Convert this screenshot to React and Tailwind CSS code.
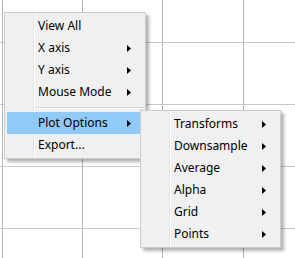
import React from "react";

function Arrow() {
  return (
    <svg width="4" height="7" viewBox="0 0 4 7" className="block">
      <path d="M0 0 L4 3.5 L0 7 Z" fill="#000" />
    </svg>
  );
}

function Item({ label, sub, active }) {
  return (
    <div
      className={`flex h-[22px] items-center mx-[2px] ${active ? "bg-[#91c9f7]" : ""}`}
    >
      <div className="w-[31px] shrink-0" />
      <div className="flex-1 text-[12px] leading-none text-black">{label}</div>
      <div className="w-[16px] shrink-0 flex items-center">{sub ? <Arrow /> : null}</div>
    </div>
  );
}

function Menu({ items, className }) {
  return (
    <div
      className={`absolute border border-[#cccccc] bg-[#f0f0f0] py-[2px] shadow-[3px_3px_3px_rgba(0,0,0,0.3)] ${className}`}
    >
      <div className="absolute top-0 bottom-0 left-[28px] w-px bg-[#e3e3e3]" />
      <div className="absolute top-0 bottom-0 left-[29px] w-px bg-white" />
      <div className="relative">
        {items.map((it, i) =>
          it.sep ? (
            <div key={i} className="h-[9px] flex flex-col justify-center pl-[30px] pr-[1px]">
              <div className="h-px bg-[#d7d7d7]" />
              <div className="h-px bg-white" />
            </div>
          ) : (
            <Item key={i} {...it} />
          )
        )}
      </div>
    </div>
  );
}

export default function App() {
  return (
    <div
      className="relative w-[295px] h-[258px] bg-white overflow-hidden"
      style={{ fontFamily: '"Noto Sans", "Open Sans", sans-serif' }}
    >
      <svg width="295" height="258" className="absolute inset-0">
        {[2, 82, 162, 243].map((x) => (
          <line key={x} x1={x + 0.5} y1="0" x2={x + 0.5} y2="258" stroke="#b4b4b4" />
        ))}
        {[42, 104, 166, 228].map((y) => (
          <line key={y} x1="0" y1={y + 0.5} x2="295" y2={y + 0.5} stroke="#c8c8c8" />
        ))}
      </svg>
      <Menu
        className="left-[4px] top-[12px] w-[142px]"
        items={[
          { label: "View All" },
          { label: "X axis", sub: true },
          { label: "Y axis", sub: true },
          { label: "Mouse Mode", sub: true },
          { sep: true },
          { label: "Plot Options", sub: true, active: true },
          { label: "Export..." },
        ]}
      />
      <Menu
        className="left-[140px] top-[110px] w-[141px]"
        items={[
          { label: "Transforms", sub: true },
          { label: "Downsample", sub: true },
          { label: "Average", sub: true },
          { label: "Alpha", sub: true },
          { label: "Grid", sub: true },
          { label: "Points", sub: true },
        ]}
      />
    </div>
  );
}
